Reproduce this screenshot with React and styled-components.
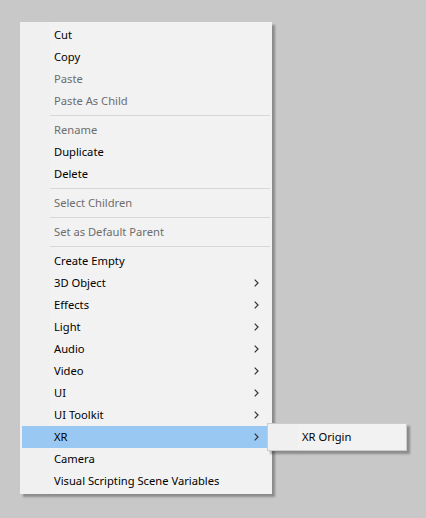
import styled, { createGlobalStyle } from 'styled-components';

const GlobalStyle = createGlobalStyle`
    html, body {
        margin: 0;
        padding: 0;
        background: #c8c8c8;
    }
    body {
        font-family: "Noto Sans", "Open Sans", sans-serif;
    }
`;

const Page = styled.div`
    width: 426px;
    height: 518px;
    padding: 22px 0 0 20px;
    box-sizing: border-box;
`;

const Menu = styled.div`
    position: relative;
    width: ${(p) => p.width}px;
    box-sizing: border-box;
    padding: 2px;
    background: linear-gradient(to right, #f0f0f0 30px, #f2f2f2 30px);
    border: ${(p) => (p.bordered ? '1px solid #cccccc' : 'none')};
    box-shadow: 3px 3px 2px rgba(0, 0, 0, 0.3);
`;

const Row = styled.div`
    position: relative;
    display: flex;
    align-items: center;
    height: 22px;
    box-sizing: border-box;
    padding: 0 11px 1px 32px;
    font-size: 11.2px;
    color: ${(p) => (p.disabled ? '#6d6d6d' : '#000000')};
    background: ${(p) => (p.active ? '#99c9f3' : 'transparent')};
    white-space: nowrap;
`;

const Label = styled.span`
    flex: 1;
`;

const Separator = styled.div`
    height: 1px;
    margin: 3px 0 3px 28px;
    background: #d7d7d7;
`;

const Submenu = styled.div`
    position: absolute;
    left: 245px;
    top: -3px;
`;

function Chevron() {
    return (
        <svg width="5" height="8" viewBox="0 0 5 8" style={{ marginTop: 1 }}>
            <path d="M0.7 0.7 L4 4 L0.7 7.3" fill="none" stroke="#333" strokeWidth="1.2" />
        </svg>
    );
}

const groups = [
    [
        { label: 'Cut' },
        { label: 'Copy' },
        { label: 'Paste', disabled: true },
        { label: 'Paste As Child', disabled: true },
    ],
    [
        { label: 'Rename', disabled: true },
        { label: 'Duplicate' },
        { label: 'Delete' },
    ],
    [{ label: 'Select Children', disabled: true }],
    [{ label: 'Set as Default Parent', disabled: true }],
    [
        { label: 'Create Empty' },
        { label: '3D Object', sub: true },
        { label: 'Effects', sub: true },
        { label: 'Light', sub: true },
        { label: 'Audio', sub: true },
        { label: 'Video', sub: true },
        { label: 'UI', sub: true },
        { label: 'UI Toolkit', sub: true },
        { label: 'XR', sub: true, active: true },
        { label: 'Camera' },
        { label: 'Visual Scripting Scene Variables' },
    ],
];

export default function App() {
    return (
        <Page>
            <GlobalStyle />
            <Menu width={252}>
                {groups.map((group, gi) => (
                    <div key={gi}>
                        {gi > 0 && <Separator />}
                        {group.map((item) => (
                            <Row key={item.label} disabled={item.disabled} active={item.active}>
                                <Label>{item.label}</Label>
                                {item.sub && <Chevron />}
                                {item.active && (
                                    <Submenu>
                                        <Menu width={140} bordered>
                                            <Row>
                                                <Label>XR Origin</Label>
                                            </Row>
                                        </Menu>
                                    </Submenu>
                                )}
                            </Row>
                        ))}
                    </div>
                ))}
            </Menu>
        </Page>
    );
}
